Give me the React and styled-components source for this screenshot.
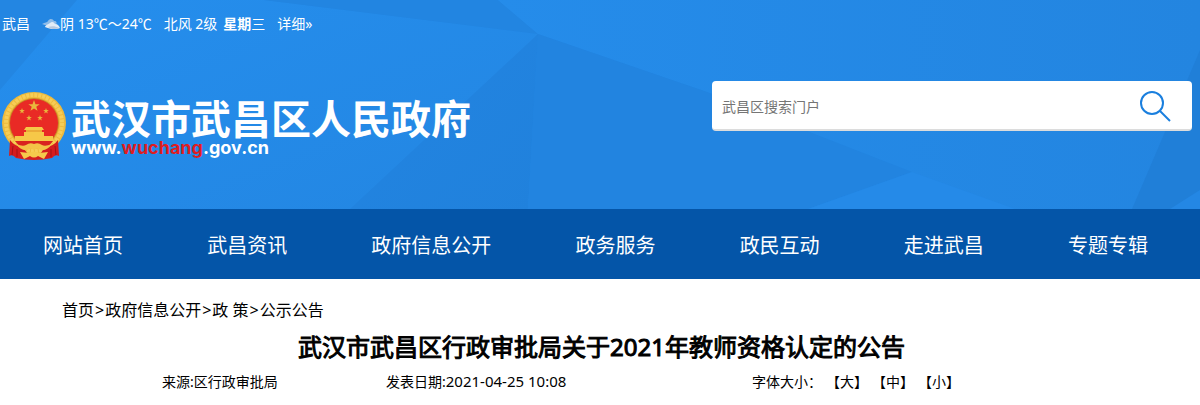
import React from "react";
import styled, { createGlobalStyle } from "styled-components";

const GlobalStyle = createGlobalStyle`
  * { box-sizing: border-box; }
  body {
    margin: 0;
    background: #fff;
    color: #000;
    font-family: "Noto Sans", "Noto Sans CJK SC", sans-serif;
    font-size: 14px;
    line-height: 20px;
  }
  a { color: inherit; text-decoration: none; }
`;

const Header = styled.header`
  position: relative;
  min-height: 209px;
  background: #2387e4;
  color: #fff;
`;

const Backdrop = styled.svg`
  position: absolute;
  inset: 0;
  width: 100%;
  height: 100%;
`;

const HeaderContent = styled.div`
  position: relative;
`;

const WeatherBar = styled.div`
  display: flex;
  align-items: center;
  height: 48px;
  padding-left: 2px;
  gap: 12px;
  white-space: nowrap;
`;

const WeatherGroup = styled.span`
  display: flex;
  align-items: center;
  gap: ${({ $gap }) => $gap || 0}px;
`;

const Unit = styled.span`
  font-family: "Noto Sans CJK SC", sans-serif;
  line-height: 1;
`;

const Masthead = styled.div`
  display: flex;
  justify-content: space-between;
  align-items: flex-start;
  padding: 33px 8px 0 1px;
`;

const Brand = styled.a`
  display: flex;
  gap: 4px;
  padding-top: 10px;
`;

const BrandText = styled.span`
  display: flex;
  flex-direction: column;
  padding-top: 9px;
  white-space: nowrap;
`;

const BrandName = styled.span`
  font-family: "Liberation Sans", "Noto Sans CJK SC", sans-serif;
  font-size: 40px;
  font-weight: 700;
  line-height: 40px;
`;

const BrandUrl = styled.span`
  font-family: Inter, sans-serif;
  font-size: 18px;
  font-weight: 700;
  line-height: 16px;
`;

const UrlHighlight = styled.span`
  color: #e01c20;
`;

const SearchForm = styled.form`
  display: flex;
  align-items: center;
  flex: 0 1 480px;
  height: 50px;
  border-radius: 4px;
  border-bottom: 2px solid #dcdcdc;
  background: #fff;
`;

const SearchInput = styled.input`
  flex: 1;
  min-width: 0;
  height: 48px;
  padding: 2px 10px 0;
  border: 0;
  outline: 0;
  background: transparent;
  font: inherit;
  &::placeholder { color: #757575; opacity: 1; }
`;

const SearchButton = styled.button`
  display: flex;
  padding: 2px 20px 0;
  border: 0;
  background: transparent;
  cursor: pointer;
`;

const Nav = styled.nav`
  display: flex;
  justify-content: space-between;
  padding: 0 10px 0 1px;
  background: #0455a8;
`;

const NavLink = styled.a`
  padding: 4px 42px 0;
  color: #fff;
  font-size: 20px;
  line-height: 66px;
  white-space: nowrap;
`;

const Breadcrumb = styled.nav`
  display: flex;
  padding: 19px 62px 0;
  font-size: 16px;
  line-height: 24px;
`;

const Separator = styled.span`
  padding: 0 1px;
`;

const Article = styled.article`
  padding: 9px 0 12px;
`;

const Title = styled.h1`
  margin: 0;
  padding-left: 3px;
  font-size: 24px;
  font-weight: 400;
  -webkit-text-stroke: 1px currentColor;
  line-height: 32px;
  text-align: center;
`;

const Meta = styled.div`
  display: grid;
  grid-template-columns: 224fr 366fr 448fr;
  align-items: baseline;
  padding: 9px 0 0 162px;
`;

const DateValue = styled.time`
  font-size: 15px;
  line-height: 1;
`;

const SizeTools = styled.span`
  display: flex;
  align-items: baseline;
  gap: 4px;
`;

const SizeButton = styled.button`
  padding: 0;
  border: 0;
  background: none;
  color: inherit;
  font: inherit;
  cursor: pointer;
`;

const NAV_ITEMS = ["网站首页", "武昌资讯", "政府信息公开", "政务服务", "政民互动", "走进武昌", "专题专辑"];
const CRUMBS = ["首页", "政府信息公开", "政 策", "公示公告"];
const SIZES = ["大", "中", "小"];

function Facets() {
  return (
    <Backdrop viewBox="0 0 1200 209" preserveAspectRatio="none" aria-hidden="true">
      <defs>
        <linearGradient id="leftGlow" x1="0" y1="0" x2="1" y2="1">
          <stop offset="0" stopColor="#258eed" />
          <stop offset="1" stopColor="#2386e2" />
        </linearGradient>
        <linearGradient id="deep" x1="0" y1="0" x2="1" y2="1">
          <stop offset="0" stopColor="#2385e2" />
          <stop offset="1" stopColor="#2081dc" />
        </linearGradient>
        <linearGradient id="topGlow" x1="0" y1="0" x2="1" y2="0">
          <stop offset="0" stopColor="#258cea" />
          <stop offset="1" stopColor="#2385e0" />
        </linearGradient>
      </defs>
      <path d="M0 0H77L0 90Z" fill="#2386e2" />
      <path d="M77 0H264L538 34L350 209H0V90Z" fill="url(#leftGlow)" />
      <path d="M264 0H498L538 34Z" fill="#2285e1" />
      <path d="M498 0H1200V209H1015L912 172L707 92L538 34Z" fill="url(#topGlow)" />
      <path d="M538 34L350 209H528Z" fill="url(#deep)" />
      <path d="M538 34L528 209H808L912 172L707 92Z" fill="#2284e0" />
      <path d="M912 172L808 209H1015Z" fill="#258ae8" />
      <path d="M1200 50L1132 209H1200Z" fill="#207fd8" />
      <path d="M1170 209L1200 190V209Z" fill="#2487e4" />
    </Backdrop>
  );
}

function Cloud() {
  return (
    <svg width="18" height="12" viewBox="0 0 18 12" aria-hidden="true">
      <path d="M0 6C3 4 5 5 6 3C8 0 11 1 12 3C15 3 15 5 14 7H3Z" fill="#8fbce8" />
      <path d="M3 9C4 6 6 7 8 5C10 3 12 4 13 6C16 6 17 8 18 10C14 12 7 11 3 9Z" fill="#e2ecf6" />
      <path d="M6 9C10 8 13 8 17 10C13 12 9 11 6 9Z" fill="#b7c9df" />
    </svg>
  );
}

const STAR = "M0 -1L.24 -.31L.95 -.31L.38 .12L.59 .81L0 .4L-.59 .81L-.38 .12L-.95 -.31L-.24 -.31Z";
const STARS = [
  [33, 15, 6],
  [21, 20, 3],
  [45, 20, 3],
  [28, 27, 3],
  [39, 27, 3],
];

function Emblem() {
  return (
    <svg width="66" height="70" viewBox="0 0 66 70" aria-hidden="true">
      <ellipse cx="33" cy="32" rx="32" ry="31" fill="#eeba3c" />
      <circle cx="33" cy="32" r="28" fill="none" stroke="#f6cd57" strokeWidth="4" strokeDasharray="3 1" />
      <circle cx="33" cy="32" r="25" fill="#c98a26" />
      <circle cx="33" cy="32" r="24" fill="#e92a25" />
      {STARS.map(([x, y, r]) => (
        <path key={`${x}-${y}`} d={STAR} transform={`translate(${x} ${y}) scale(${r})`} fill="#e9b63c" />
      ))}
      <path d="M25 36H41L43 39H41V41H43V45H52V50H14V45H23V41H25V39H23Z" fill="#f6c848" />
      <path d="M25 40H41" stroke="#e08f28" strokeWidth="1" />
      <path d="M14 50H52L47 56H19Z" fill="#d9231f" />
      <path d="M9 49Q14 56 22 56L26 62H40L44 56Q52 56 57 49L58 65Q54 63 51 67Q33 71 15 67Q12 63 8 65Z" fill="#d41c1f" />
      <path d="M15 53Q22 56 25 54Q29 51 33 53Q37 51 41 54Q44 56 51 53Q46 60 40 59Q36 56 33 59Q30 56 26 59Q20 60 15 53Z" fill="#f3c347" />
      <path d="M19 61L28 62Q33 59 38 62L47 61L43 68L37 65Q33 68 29 65L23 68Z" fill="#f5c94c" />
      <path d="M12 55L11 64M16 58V66M54 55L55 64M50 58V66" stroke="#a31317" strokeWidth="1" />
    </svg>
  );
}

export default function App() {
  return (
    <>
      <GlobalStyle />
      <Header>
        <Facets />
        <HeaderContent>
          <WeatherBar>
            <span>武昌</span>
            <WeatherGroup>
              <Cloud />
              <span>阴 13<Unit>℃～</Unit>24<Unit>℃</Unit></span>
            </WeatherGroup>
            <WeatherGroup $gap={6}>
              <span>北风 2级</span>
              <span><b>星期</b>三</span>
            </WeatherGroup>
            <a href="#weather">详细»</a>
          </WeatherBar>
          <Masthead>
            <Brand href="#home">
              <Emblem />
              <BrandText>
                <BrandName>武汉市武昌区人民政府</BrandName>
                <BrandUrl>www.<UrlHighlight>wuchang</UrlHighlight>.gov.cn</BrandUrl>
              </BrandText>
            </Brand>
            <SearchForm role="search">
              <SearchInput type="text" aria-label="武昌区搜索门户" placeholder="武昌区搜索门户" />
              <SearchButton type="button" aria-label="搜索">
                <svg width="32" height="32" viewBox="0 0 32 32" fill="none" stroke="#1a7fde" strokeWidth="2">
                  <circle cx="12" cy="13" r="11" />
                  <path d="M20 21L30 31" />
                </svg>
              </SearchButton>
            </SearchForm>
          </Masthead>
        </HeaderContent>
      </Header>
      <Nav>
        {NAV_ITEMS.map((item) => (
          <NavLink key={item} href="#nav">{item}</NavLink>
        ))}
      </Nav>
      <main>
        <Breadcrumb>
          {CRUMBS.map((crumb, i) => (
            <React.Fragment key={crumb}>
              {i > 0 && <Separator>&gt;</Separator>}
              <a href="#crumb">{crumb}</a>
            </React.Fragment>
          ))}
        </Breadcrumb>
        <Article>
          <Title>武汉市武昌区行政审批局关于2021年教师资格认定的公告</Title>
          <Meta>
            <span>来源:区行政审批局</span>
            <span>发表日期:<DateValue>2021-04-25 10:08</DateValue></span>
            <SizeTools>
              <span>字体大小：</span>
              {SIZES.map((size) => (
                <SizeButton key={size} type="button">【{size}】</SizeButton>
              ))}
            </SizeTools>
          </Meta>
        </Article>
      </main>
    </>
  );
}
